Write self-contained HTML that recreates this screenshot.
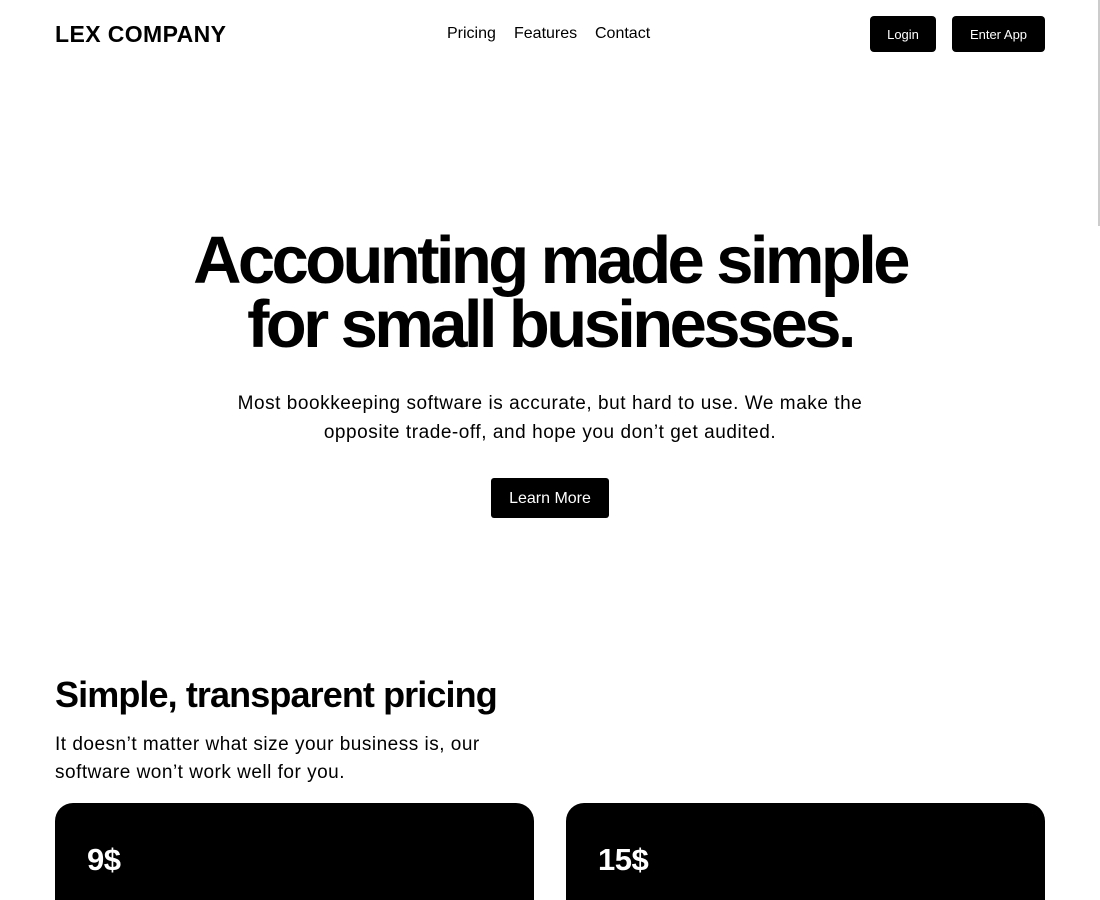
<!DOCTYPE html>
<html><head><meta charset="utf-8"><style>
*{margin:0;padding:0;box-sizing:border-box}
html,body{width:1100px;height:900px;overflow:hidden}
body{background:#fff;font-family:"Liberation Sans",sans-serif;color:#000;position:relative}
.logo{position:absolute;left:55px;top:21px;font-size:23px;font-weight:bold;letter-spacing:0.4px}
.nav{position:absolute;top:25px;font-size:16px}
.btn{position:absolute;top:16px;height:36px;background:#000;color:#fff;border-radius:4px;font-size:13px;display:flex;align-items:center;justify-content:center}
h1{position:absolute;left:0;width:1100px;top:229px;text-align:center;font-size:67px;line-height:64px;letter-spacing:-3.6px;font-weight:bold}
.sub{position:absolute;left:0;width:1100px;top:389px;text-align:center;font-size:19px;line-height:29px;letter-spacing:0.55px}
.lm{position:absolute;left:491px;top:478px;width:118px;height:40px;background:#000;color:#fff;border-radius:3px;font-size:16px;display:flex;align-items:center;justify-content:center;padding-top:1px}
h2{position:absolute;left:55px;top:674px;font-size:36px;letter-spacing:-0.9px;font-weight:bold}
.p2{position:absolute;left:55px;top:731px;font-size:19px;line-height:28px;width:470px;letter-spacing:0.5px}
.card{position:absolute;top:803px;width:479px;height:120px;background:#000;border-radius:18px;color:#fff}
.card span{position:absolute;left:32px;top:39px;font-size:31px;font-weight:bold;letter-spacing:-0.5px}
.sb{position:absolute;right:0;top:0;width:2px;height:226px;background:#ccc}
</style></head><body>
<div class="logo">LEX COMPANY</div>
<div class="nav" style="left:447px">Pricing</div>
<div class="nav" style="left:514px">Features</div>
<div class="nav" style="left:595px">Contact</div>
<div class="btn" style="left:870px;width:66px">Login</div>
<div class="btn" style="left:952px;width:93px">Enter App</div>
<h1>Accounting made simple<br>for small businesses.</h1>
<div class="sub">Most bookkeeping software is accurate, but hard to use. We make the<br>opposite trade-off, and hope you don’t get audited.</div>
<div class="lm">Learn More</div>
<h2>Simple, transparent pricing</h2>
<div class="p2">It doesn’t matter what size your business is, our software won’t work well for you.</div>
<div class="card" style="left:55px"><span>9$</span></div>
<div class="card" style="left:566px"><span>15$</span></div>
<div class="sb"></div>
</body></html>
